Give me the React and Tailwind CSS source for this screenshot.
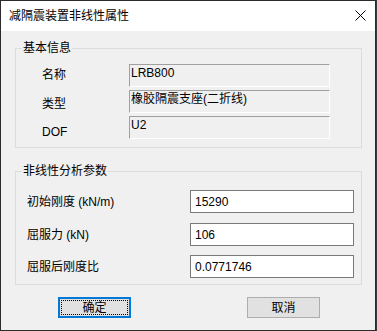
import React from "react";

const font = { fontFamily: '"Liberation Sans", "Noto Sans CJK SC", sans-serif' };

const infoRows = [
  { label: "名称", value: "LRB800", shift: "pt-0" },
  { label: "类型", value: "橡胶隔震支座(二折线)", shift: "pt-[3px]" },
  { label: "DOF", value: "U2", shift: "pt-[5px]" },
];

const params = [
  { label: "初始刚度 (kN/m)", value: "15290", mt: "mt-[11px]" },
  { label: "屈服力 (kN)", value: "106", mt: "mt-[10px]" },
  { label: "屈服后刚度比", value: "0.0771746", mt: "mt-[9px]" },
];

export default function App() {
  return (
    <div className="w-[377px] h-[331px] bg-[#3a3a3a] text-[12px] leading-[16px] text-black" style={font}>
      <div className="w-[376px] h-[331px] border border-[#2b2b2b] bg-[#f0f0f0] flex flex-col">
        {/* Title bar */}
        <div className="h-[30px] bg-white flex items-center pl-[8px] pr-[9px] shrink-0">
          <span className="flex-1 text-[12px]">减隔震装置非线性属性</span>
          <svg width="11" height="11" viewBox="0 0 11 11" className="mt-[-1px]">
            <path d="M0.5 0.5 L10.5 10.5 M10.5 0.5 L0.5 10.5" stroke="#000" strokeWidth="1" fill="none" />
          </svg>
        </div>

        {/* Body */}
        <div className="flex-1 px-[14px]">
          <fieldset className="mt-[9px] w-[347px] border border-[#dcdcdc] pl-[26px] pr-[31px] pb-[8px]">
            <legend className="ml-[-20px] px-[1px] leading-[16px]">基本信息</legend>
            <div className="mt-[8px] flex flex-col gap-[3px]">
              {infoRows.map((r) => (
                <div key={r.label} className="flex items-start h-[23px]">
                  <span className={`w-[87px] ${r.shift} mt-[3px]`}>{r.label}</span>
                  <div className="w-[201px] h-[23px] border-t border-l border-t-[#a0a0a0] border-l-[#a0a0a0] border-b border-r border-b-white border-r-white pl-[1px] leading-[16px]">
                    {r.value}
                  </div>
                </div>
              ))}
            </div>
          </fieldset>

          <fieldset className="mt-[15px] w-[347px] border border-[#dcdcdc] pl-[11px] pr-[7px] pb-[6px]">
            <legend className="ml-[-5px] px-[1px] leading-[16px]">非线性分析参数</legend>
            {params.map((p) => (
              <div key={p.label} className={`${p.mt} flex items-center h-[23px]`}>
                <span className="flex-1">{p.label}</span>
                <div className="w-[164px] h-[23px] bg-white border border-[#7a7a7a] flex items-center pl-[4px]">
                  {p.value}
                </div>
              </div>
            ))}
          </fieldset>

          <div className="mt-[12px] flex">
            <button className="ml-[43px] w-[73px] h-[21px] border-2 border-[#0078d7] bg-[#e1e1e1] p-[1px]">
              <span className="flex items-center justify-center w-full h-full border border-dotted border-black">确定</span>
            </button>
            <button className="ml-[116px] w-[73px] h-[21px] border border-[#adadad] bg-[#e1e1e1] flex items-center justify-center">
              取消
            </button>
          </div>
        </div>
      </div>
    </div>
  );
}
